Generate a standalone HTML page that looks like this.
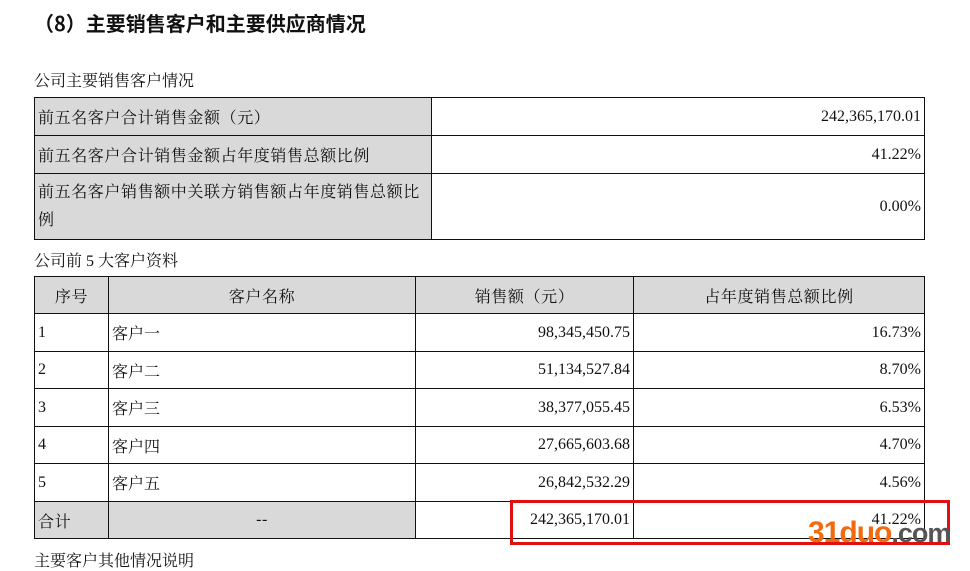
<!DOCTYPE html>
<html><head><meta charset="utf-8"><style>
body{margin:0;width:970px;height:559px;overflow:hidden;background:#fff;font-family:"Liberation Serif","Noto Serif CJK SC",serif;color:#111;position:relative}
.a{position:absolute}
table{position:absolute;border-collapse:collapse;font-size:16px}
td{border:1px solid #111;padding:0 3px;}
.g{background:#d9d9d9;letter-spacing:0.6px}
.r{text-align:right}
.c{text-align:center}
</style></head><body>
<div class="a" style="left:34px;top:8px;font-size:20px;font-weight:bold;font-family:'Noto Sans CJK SC',sans-serif">（8）主要销售客户和主要供应商情况</div>
<div class="a" style="left:34px;top:68px;font-size:16px">公司主要销售客户情况</div>
<table style="left:34px;top:97px;width:891px">
<tr style="height:38px"><td class="g" style="width:390px">前五名客户合计销售金额（元）</td><td class="r">242,365,170.01</td></tr>
<tr style="height:38px"><td class="g">前五名客户合计销售金额占年度销售总额比例</td><td class="r">41.22%</td></tr>
<tr style="height:66px"><td class="g" style="line-height:28px">前五名客户销售额中关联方销售额占年度销售总额比<br>例</td><td class="r">0.00%</td></tr>
</table>
<div class="a" style="left:34px;top:248px;font-size:16px">公司前 5 大客户资料</div>
<table style="left:34px;top:276px;width:891px">
<tr style="height:37px" class="g"><td class="c" style="width:67px">序号</td><td class="c" style="width:300px">客户名称</td><td class="c" style="width:211px">销售额（元）</td><td class="c">占年度销售总额比例</td></tr>
<tr style="height:38px"><td>1</td><td>客户一</td><td class="r">98,345,450.75</td><td class="r">16.73%</td></tr>
<tr style="height:37px"><td>2</td><td>客户二</td><td class="r">51,134,527.84</td><td class="r">8.70%</td></tr>
<tr style="height:38px"><td>3</td><td>客户三</td><td class="r">38,377,055.45</td><td class="r">6.53%</td></tr>
<tr style="height:37px"><td>4</td><td>客户四</td><td class="r">27,665,603.68</td><td class="r">4.70%</td></tr>
<tr style="height:38px"><td>5</td><td>客户五</td><td class="r">26,842,532.29</td><td class="r">4.56%</td></tr>
<tr style="height:37px"><td class="g">合计</td><td class="g c">--</td><td class="r">242,365,170.01</td><td class="r">41.22%</td></tr>
</table>
<div class="a" style="left:510px;top:500px;width:434px;height:39px;border:3px solid #e01010"></div>
<div class="a" style="left:808px;top:516px;font-family:'Liberation Sans',sans-serif;font-weight:bold;font-size:30px;color:#f26a10;letter-spacing:-1px">31duo<span style="color:#555;font-size:27px">.com</span></div>
<div class="a" style="left:34px;top:548px;font-size:16px">主要客户其他情况说明</div>
</body></html>
